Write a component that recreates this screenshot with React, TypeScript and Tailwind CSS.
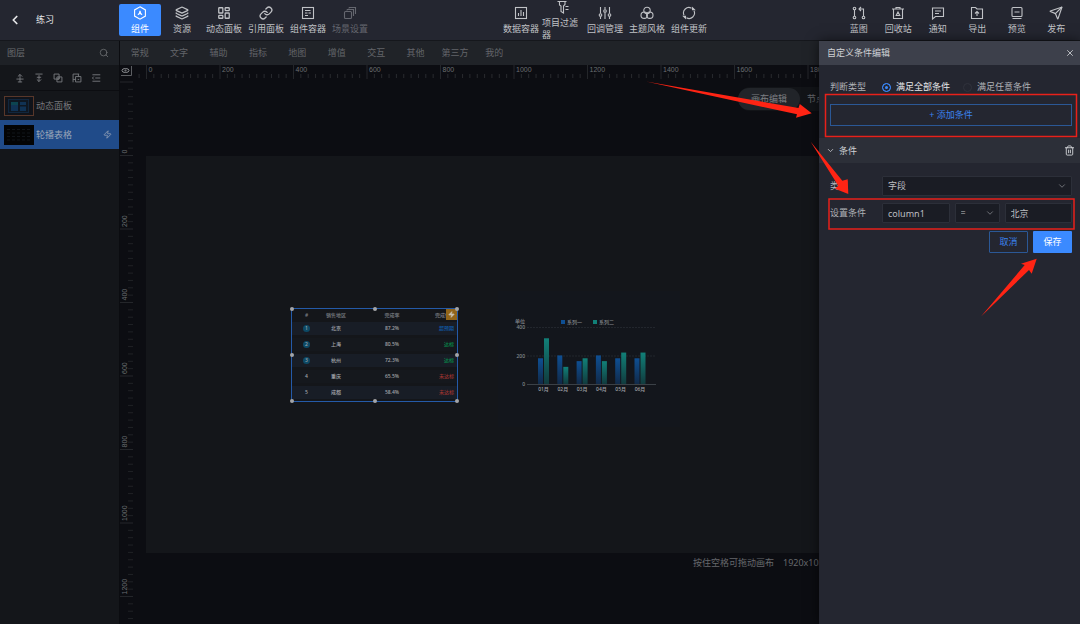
import React from "react";
import {
	ChevronDown,
	ChevronLeft,
	LayoutDashboard,
	Layers,
	Link,
	Search,
	Send,
	Trash2,
	X,
	Zap,
} from "lucide-react";

const Glyph = ({ children }: { children: React.ReactNode }) => (
	<svg
		viewBox="0 0 14 14"
		className="size-[14px] shrink-0"
		fill="none"
		stroke="currentColor"
		strokeWidth="1.1"
	>
		{children}
	</svg>
);

const mainTools = [
	{
		label: "组件",
		icon: (
			<Glyph>
				<path d="M7 .8 12.4 3.9v6.2L7 13.2 1.6 10.1V3.9z" />
				<path d="M4.8 8.8c1.4-.3 2-1.800 2.200-4 .3 2.200.8 3.700 2.200 4M6 7.700h2.500" />
			</Glyph>
		),
	},
	{ label: "资源", icon: <Layers className="size-[14px]" strokeWidth={2.2} /> },
	{
		label: "动态面板",
		icon: <LayoutDashboard className="size-[14px]" strokeWidth={2.2} />,
	},
	{ label: "引用面板", icon: <Link className="size-[14px]" strokeWidth={2.2} /> },
	{
		label: "组件容器",
		icon: (
			<Glyph>
				<rect x="1.5" y="1.5" width="11" height="11" />
				<path d="M4 4.5h5.500M4 7h2.500M4 9.5h3M7.500 7H10" />
			</Glyph>
		),
	},
	{
		label: "场景设置",
		icon: (
			<Glyph>
				<rect x="1.5" y="5.5" width="7" height="7" rx="1" />
				<path d="M4 3.5h6.5V10M6 1.5h6.5V8M4 3.5v1M6 1.5v1" />
			</Glyph>
		),
	},
];

const projectTools = [
	{
		label: "数据容器",
		icon: (
			<Glyph>
				<rect x="1.5" y="1.5" width="11" height="11" />
				<path d="M4.5 10V7M7 10V4M9.5 10V6" />
			</Glyph>
		),
	},
	{
		label: "项目过滤器",
		icon: (
			<Glyph>
				<path d="M1.500 1.500h9M3.500 1.500V5l1.500 1v5.500l2.500 1.500V6L9 4.500v-3M9.500 6.500h3M9.500 9.500h3" />
			</Glyph>
		),
	},
	{
		label: "回调管理",
		icon: (
			<Glyph>
				<path d="M2.5 1v6.5M2.5 10.5V13M7 1v2.5M7 6.5V13M11.5 1v6.5M11.5 10.5V13" />
				<circle cx="2.5" cy="9" r="1.3" />
				<circle cx="7" cy="5" r="1.3" />
				<circle cx="11.5" cy="9" r="1.3" />
			</Glyph>
		),
	},
	{
		label: "主题风格",
		icon: (
			<Glyph>
				<circle cx="7" cy="4.5" r="3.2" />
				<circle cx="4.2" cy="9.2" r="3.2" />
				<circle cx="9.8" cy="9.2" r="3.2" />
			</Glyph>
		),
	},
	{
		label: "组件更新",
		icon: (
			<Glyph>
				<path d="M2 9.2A5.4 5.4 0 0 1 9.5 2.2M12 4.800A5.4 5.4 0 0 1 4.5 11.8" />
				<path d="M10.500 1.800v2h2zM3.500 12.200v-2h-2z" fill="currentColor" />
			</Glyph>
		),
	},
];

const pageTools = [
	{
		label: "蓝图",
		icon: (
			<Glyph>
				<circle cx="2.5" cy="2.5" r="1.3" />
				<circle cx="2.5" cy="11.5" r="1.3" />
				<circle cx="11.5" cy="11.5" r="1.3" />
				<path d="M2.5 4v6M11.5 10V3H7.5M9 1 7 3l2 2" />
			</Glyph>
		),
	},
	{
		label: "回收站",
		icon: (
			<Glyph>
				<path d="M1 3h12M5 3V1.5h4V3M2.5 3v9.500h9V3M7 6 8.800 9.500H5.200z" />
			</Glyph>
		),
	},
	{
		label: "通知",
		icon: (
			<Glyph>
				<path d="M1.500 2h11v8.500H4.500l-3 2.500zM4 5h6M4 7.500h4" />
			</Glyph>
		),
	},
	{
		label: "导出",
		icon: (
			<Glyph>
				<path d="M1.5 1.5h4L7 3h5.5v9.5h-11zM7 10V5.500M5 7.500l2-2 2 2" />
			</Glyph>
		),
	},
	{
		label: "预览",
		icon: (
			<Glyph>
				<rect x="2" y="1.5" width="10" height="9" rx="1" />
				<path d="M4.5 6h5M2.5 12.5h9" />
			</Glyph>
		),
	},
	{ label: "发布", icon: <Send className="size-[14px]" strokeWidth={2} /> },
];

const categories = [
	"常规",
	"文字",
	"辅助",
	"指标",
	"地图",
	"增值",
	"交互",
	"其他",
	"第三方",
	"我的",
];

const layerActions = [
	{ label: "上移", d: "M7 13V2M4 5l3-3 3 3M2 8.500h10M4 12.500h6" },
	{ label: "下移", d: "M7 3v9M4 9l3 3 3-3M4 6h6M2 1.500h10" },
	{ label: "置顶", d: "M1.500 1.500h7v7h-7zM5.500 5.500h7v7h-7zM8.500 5.500v3h-3" },
	{ label: "置底", d: "M1.500 13V1.500H10M5 12.500h7.500V5H5zM1.500 9H5M9 1.500V5M8 9h2" },
	{ label: "列表", d: "M2 2.500h11M6 7h7M2 11.500h11M4 5 2 7l2 2" },
];

const regions = [
	{ name: "北京", rate: "87.2%", state: "超预期", color: "text-[#105aa6]" },
	{ name: "上海", rate: "80.5%", state: "达标", color: "text-[#078a4b]" },
	{ name: "杭州", rate: "72.3%", state: "达标", color: "text-[#078a4b]" },
	{ name: "重庆", rate: "65.5%", state: "未达标", color: "text-[#9a3330]" },
	{ name: "成都", rate: "58.4%", state: "未达标", color: "text-[#9a3330]" },
];

const months = [
	{ name: "01月", a: 180, b: 320 },
	{ name: "02月", a: 200, b: 120 },
	{ name: "03月", a: 160, b: 180 },
	{ name: "04月", a: 200, b: 160 },
	{ name: "05月", a: 180, b: 220 },
	{ name: "06月", a: 180, b: 220 },
];

const handles = [
	"left-0 top-0",
	"left-1/2 top-0",
	"left-full top-0",
	"left-0 top-1/2",
	"left-full top-1/2",
	"left-0 top-full",
	"left-1/2 top-full",
	"left-full top-full",
];

// 200 canvas units on the rulers
const STEP = 73.5;
const marksX = [0, 1, 2, 3, 4, 5, 6, 7, 8, 9];
const marksY = [0, 1, 2, 3, 4, 5, 6];
const minor = [1, 2, 3, 4, 5, 6, 7, 8, 9];

const ToolButton = ({
	label,
	icon,
	className,
}: {
	label: string;
	icon: React.ReactNode;
	className: string;
}) => (
	<button
		type="button"
		className={`flex h-8 flex-col items-center justify-center gap-[3px] rounded-[2px] ${className}`}
	>
		{icon}
		<span className="text-left leading-[12px]">{label}</span>
	</button>
);

const Header = () => (
	<header className="flex h-[41px] items-start justify-between border-b border-[#15171c] bg-[#242630] pr-1 text-[#c0c2c6]">
		<div className="flex h-10 items-center">
			<div className="flex w-[119px] items-center gap-[14px] pl-2 text-[#e6e6e8]">
				<button type="button" aria-label="返回">
					<ChevronLeft className="size-[14px]" strokeWidth={3} />
				</button>
				<h1>练习</h1>
			</div>
			{mainTools.map((tool, i) => (
				<ToolButton
					key={tool.label}
					{...tool}
					className={
						i === 0
							? "w-[42px] bg-[#3b8aff] text-white"
							: i === 5
								? "w-[42px] text-[#65676f]"
								: "w-[42px]"
					}
				/>
			))}
		</div>
		<div className="flex h-10 items-center">
			{projectTools.map((tool) => (
				<ToolButton key={tool.label} {...tool} className="w-[42px]" />
			))}
		</div>
		<div className="flex h-10 w-[237px] items-center">
			{pageTools.map((tool) => (
				<ToolButton key={tool.label} {...tool} className="flex-1" />
			))}
		</div>
	</header>
);

const Sidebar = () => (
	<aside className="flex w-[120px] shrink-0 flex-col border-r border-[#0b0c10] bg-[#14161a] text-[#77797d]">
		<div className="flex h-6 items-center justify-between bg-[#1e2126] pr-[10px] pl-[7px] text-[#6a6c70]">
			<h2>图层</h2>
			<button type="button" aria-label="搜索">
				<Search className="size-[10px]" />
			</button>
		</div>
		<div className="flex h-[26px] items-center gap-[9px] border-b border-[#0c0d11] pl-[15px]">
			{layerActions.map((action) => (
				<button key={action.label} type="button" aria-label={action.label}>
					<svg
						viewBox="0 0 14 14"
						className="size-[10px]"
						fill="none"
						stroke="currentColor"
						strokeWidth="1.3"
					>
						<path d={action.d} />
					</svg>
				</button>
			))}
		</div>
		<ul>
			<li className="flex h-[29px] items-center gap-[2px] pl-1">
				<svg viewBox="0 0 30 20" className="h-5 w-[30px]">
					<rect x=".5" y=".5" width="29" height="19" fill="#10131a" stroke="#58372a" />
					<rect x="4.5" y="3.5" width="20" height="13" fill="#0e1722" stroke="#11263d" />
					<path d="M7 6h7v3H7z" fill="#0c4450" />
					<path d="M7 9h7v6H7zM16 6h6v3h-6zM16 10.5h6V15h-6z" fill="#103254" />
				</svg>
				<span>动态面板</span>
			</li>
			<li className="flex h-[29px] items-center gap-[2px] bg-[#204b89] pr-[7px] pl-1 text-[#9aa6b8]">
				<svg viewBox="0 0 30 20" className="h-5 w-[30px]">
					<rect width="30" height="20" fill="#030405" />
					<path
						d="M3 4.5h24M3 8h24M3 11.5h24M3 15h24"
						stroke="#11151a"
						strokeDasharray="3 2"
					/>
				</svg>
				<span className="flex-1">轮播表格</span>
				<Zap className="size-[9px]" />
			</li>
		</ul>
	</aside>
);

const TopRuler = () => (
	<svg className="h-[14px] min-w-0 flex-1" fontFamily="Liberation Sans" fontSize="7">
		<path d="M6.1 9v4" stroke="#292b2f" />
		{marksX.map((n) => (
			<g key={n} transform={`translate(${13.5 + n * STEP} 0)`}>
				<path d="M0 0v14" stroke="#24262a" />
				{minor.map((k) => (
					<path key={k} d={`M${(k * STEP) / 10} 9v4`} stroke="#292b2f" />
				))}
				<text x="2" y="7" fill="#6b6d71">
					{n * 200}
				</text>
			</g>
		))}
	</svg>
);

const SideRuler = () => (
	<div className="relative w-[13px] shrink-0 overflow-hidden">
		<svg
			className="absolute inset-0 h-full w-full"
			fontFamily="Liberation Sans"
			fontSize="7"
		>
			<path d="M0 3h13" stroke="#24262a" />
			{minor.map((k) => (
				<path key={k} d={`M8 ${3 + (k * STEP) / 10}h5`} stroke="#202226" />
			))}
			{marksY.map((n) => (
				<g key={n} transform={`translate(0 ${76.5 + n * STEP})`}>
					<path d="M0 0h13" stroke="#24262a" />
					{minor.map((k) => (
						<path key={k} d={`M8 ${(k * STEP) / 10}h5`} stroke="#202226" />
					))}
					<text x="2" y="7" transform="rotate(-90)" fill="#6b6d71">
						{n * 200}
					</text>
				</g>
			))}
		</svg>
	</div>
);

const RegionTable = () => (
	<div className="absolute top-[152px] left-[145px] w-[167px] border border-[#245aa8]">
		<table className="-mb-px w-full table-fixed border-separate border-spacing-x-0 border-spacing-y-[3px] text-center text-[5px] leading-[7px] font-medium text-[#a3a6ab]">
			<thead>
				<tr className="h-[7px] text-[#7b7e84]">
					<th className="w-[29px] p-0 font-medium">#</th>
					<th className="w-[30px] p-0 font-medium">销售地区</th>
					<th className="p-0 font-medium">完成率</th>
					<th className="w-[24px] p-0 font-medium">完成情况</th>
				</tr>
			</thead>
			<tbody>
				{regions.map((region, i) => (
					<tr
						key={region.name}
						className={i % 2 === 0 ? "h-[13px] bg-[#181d26]" : "h-[13px] bg-[#15181d]"}
					>
						<td className="p-0">
							<span
								className={
									i < 3
										? "mx-auto block size-[7px] rounded-full bg-[#0d4a66]"
										: "block"
								}
							>
								{i + 1}
							</span>
						</td>
						<td className="p-0">{region.name}</td>
						<td className="p-0">{region.rate}</td>
						<td className={`p-0 pr-[3px] text-right ${region.color}`}>
							{region.state}
						</td>
					</tr>
				))}
			</tbody>
		</table>
		<span className="absolute top-0 right-0 flex size-[11px] items-center justify-center bg-[#92651a]">
			<Zap className="size-[7px] fill-[#c9c2b4] text-[#c9c2b4]" />
		</span>
		{handles.map((place) => (
			<i
				key={place}
				className={`absolute size-1 -translate-1/2 rounded-full bg-[#a3a5a8] ${place}`}
			/>
		))}
	</div>
);

const SeriesChart = () => (
	<svg
		viewBox="0 0 182 136"
		className="absolute top-[135px] left-[352px] h-[136px] w-[182px] bg-[#13161c]"
		fontFamily="Noto Sans, Noto Sans CJK SC, sans-serif"
		fontSize="5"
		fontWeight="500"
		fill="#85898e"
	>
		<defs>
			<linearGradient id="blue" x2="0" y2="1">
				<stop stopColor="#0e4f93" />
				<stop offset="1" stopColor="#112a49" />
			</linearGradient>
			<linearGradient id="teal" x2="0" y2="1">
				<stop stopColor="#118078" />
				<stop offset="1" stopColor="#113b3e" />
			</linearGradient>
		</defs>
		<text x="17" y="32">
			单位
		</text>
		<rect x="63" y="29" width="4" height="4" fill="#0e4f93" />
		<text x="69" y="33">
			系列一
		</text>
		<rect x="95" y="29" width="4" height="4" fill="#118078" />
		<text x="101" y="33">
			系列二
		</text>
		<g textAnchor="end">
			<text x="27" y="38">
				400
			</text>
			<text x="27" y="67">
				200
			</text>
			<text x="27" y="95">
				0
			</text>
		</g>
		<path d="M29 36.5h129M29 65h129" stroke="#22262d" strokeDasharray="2 1" />
		{months.map((month, i) => (
			<g key={month.name} transform={`translate(${40 + i * 19.3} 0)`}>
				<rect y={93 - month.a / 7} width="5" height={month.a / 7} fill="url(#blue)" />
				<rect
					x="6"
					y={93 - month.b / 7}
					width="5"
					height={month.b / 7}
					fill="url(#teal)"
				/>
				<text x="5.5" y="100" textAnchor="middle" fill="#a0a3a8">
					{month.name}
				</text>
			</g>
		))}
		<path d="M29 93.5h129" stroke="#3b4147" />
	</svg>
);

const Workspace = () => (
	<main className="flex min-w-0 flex-1 flex-col overflow-hidden bg-[#0c0d12]">
		<nav className="h-6 bg-[#202328] text-[#63656a]">
			<div className="flex h-full w-[394px] items-center">
				{categories.map((name) => (
					<button key={name} type="button" className="flex-1">
						{name}
					</button>
				))}
			</div>
		</nav>
		<div className="flex h-[14px]">
			<svg
				viewBox="0 0 13 14"
				className="h-[14px] w-[13px] shrink-0"
				fill="none"
				stroke="#8a8c90"
			>
				<ellipse cx="5.5" cy="5.5" rx="3.5" ry="2" />
				<circle cx="5.5" cy="5.5" r=".6" />
				<path d="M1 10.5h10.5V1" stroke="#5c5e62" />
			</svg>
			<TopRuler />
		</div>
		<div className="flex flex-1">
			<SideRuler />
			<div className="relative min-w-0 flex-1 overflow-hidden">
				<div className="absolute top-[77px] left-[13px] h-[397px] w-[706px] bg-[#14161a]">
					<RegionTable />
					<SeriesChart />
				</div>
				<div className="absolute top-[8px] left-[605px] flex h-6 items-center rounded-full bg-[#121418] text-[#66686c]">
					<button
						type="button"
						className="h-[22px] w-[62px] rounded-full bg-[#212429] text-[#7d7f83]"
					>
						画布编辑
					</button>
					<button type="button" className="w-[50px] whitespace-nowrap">
						节点编辑
					</button>
				</div>
				<p className="absolute top-[477px] left-[560px] flex gap-[9px] whitespace-nowrap text-[#66686c]">
					<span>按住空格可拖动画布</span>
					<span>1920x1080</span>
				</p>
			</div>
		</div>
	</main>
);

const fieldClass =
	"h-5 w-full appearance-none rounded-[1px] border border-[#2c2f39] bg-[#1a1c24] px-[5px] text-[#bcbec2] outline-none";

const ConditionPanel = () => (
	<section className="relative w-[261px] shrink-0 bg-[#242630] text-[#b0b2b7] shadow-[0_0_12px_#0009]">
		<div className="flex h-6 items-center justify-between bg-[#3d404b] pr-[5px] pl-2 text-[#d0d2d6]">
			<h2>自定义条件编辑</h2>
			<button type="button" aria-label="关闭">
				<X className="size-[10px]" />
			</button>
		</div>
		<div
			role="radiogroup"
			aria-labelledby="match-title"
			className="flex items-center pt-[15px] pl-[11px]"
		>
			<span id="match-title" className="w-[52px]">
				判断类型
			</span>
			<label className="flex w-[81px] items-center gap-[5px] text-[#e8e9eb]">
				<input
					type="radio"
					name="match"
					defaultChecked
					className="size-[9px] appearance-none rounded-full border border-[#3b8aff] checked:bg-[#3b8aff] checked:shadow-[inset_0_0_0_2px_#242630]"
				/>
				满足全部条件
			</label>
			<label className="flex items-center gap-[5px]">
				<input
					type="radio"
					name="match"
					className="size-[9px] appearance-none rounded-full border border-[#30323c] checked:bg-[#3b8aff]"
				/>
				满足任意条件
			</label>
		</div>
		<div className="px-[11px] pt-[10px] pr-2 pb-3">
			<button
				type="button"
				className="h-[22px] w-full border border-[#2b5896] text-[#3b82ee]"
			>
				+ 添加条件
			</button>
		</div>
		<div className="flex h-[25px] items-center bg-[#2c2f38] pr-[5px] pl-[7px] text-[#d0d2d6]">
			<ChevronDown className="size-[9px]" />
			<h3 className="flex-1 pl-1">条件</h3>
			<button type="button" aria-label="删除条件">
				<Trash2 className="size-[11px]" />
			</button>
		</div>
		<form className="flex flex-col pt-[13px] pr-2 pl-[11px]">
			<div className="flex items-center">
				<label htmlFor="kind" className="w-[52px]">
					类型
				</label>
				<div className="relative flex-1">
					<select id="kind" className={fieldClass}>
						<option>字段</option>
					</select>
					<ChevronDown className="pointer-events-none absolute top-[5px] right-[5px] size-[10px] text-[#7d7f86]" />
				</div>
			</div>
			<div className="flex items-center pt-[7px]">
				<label htmlFor="column" className="w-[52px]">
					设置条件
				</label>
				<div className="flex flex-1 gap-[5px]">
					<div className="flex-3">
						<input id="column" defaultValue="column1" className={fieldClass} />
					</div>
					<div className="relative flex-2">
						<select aria-label="运算符" className={fieldClass}>
							<option>=</option>
						</select>
						<ChevronDown className="pointer-events-none absolute top-[5px] right-[5px] size-[10px] text-[#7d7f86]" />
					</div>
					<div className="flex-3">
						<input aria-label="条件值" defaultValue="北京" className={fieldClass} />
					</div>
				</div>
			</div>
			<div className="flex justify-end gap-[5px] pt-2">
				<button
					type="button"
					className="h-[22px] w-[39px] rounded-[1px] border border-[#2b5896] text-[#3b82ee]"
				>
					取消
				</button>
				<button
					type="submit"
					className="h-[22px] w-[39px] rounded-[1px] bg-[#3b8aff] text-white"
				>
					保存
				</button>
			</div>
		</form>
		{/* step markers drawn over the panel */}
		<svg
			viewBox="0 0 261 300"
			className="pointer-events-none absolute top-0 left-0 h-[300px] w-[261px] overflow-visible"
			fill="#ff2414"
		>
			<g fill="none" stroke="#e8211a" strokeWidth="1.5">
				<rect x="6.5" y="53.5" width="251" height="42" />
				<rect x="10" y="158" width="245" height="30" />
			</g>
			<path d="M-173 40.500-20.500 67l1.300-4L-7.300 72.300-23 76.700l1-3.400z" />
			<path d="M-8.500 100.500 23.300 139.700l5.400-1.400.6 14.700L16 147.700l3.300-3z" />
			<path d="M162 275.500 205.700 224l-3.700-1.300 15.700-5-5 15-2.700-3.700z" />
		</svg>
	</section>
);

const App = () => {
	return (
		<div className="flex min-h-screen flex-col bg-[#0c0d12] font-['Noto_Sans','Noto_Sans_CJK_SC',sans-serif] text-[9px] leading-[14px]">
			<Header />
			<div className="flex flex-1">
				<Sidebar />
				<Workspace />
				<ConditionPanel />
			</div>
		</div>
	);
};

export default App;
